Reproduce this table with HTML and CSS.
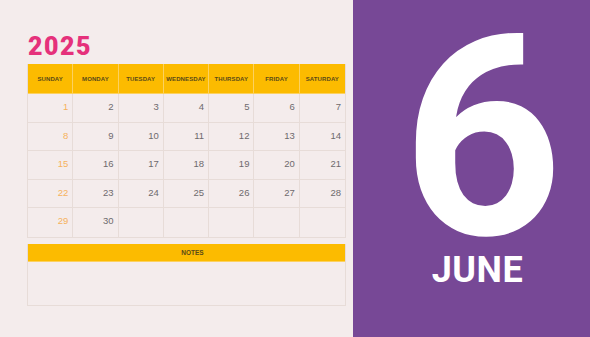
FILE: index.html
```html
<!DOCTYPE html>
<html>
<head>
<meta charset="utf-8">
<link rel="stylesheet" href="styles.css">
</head>
<body>
<div class="page">
  <section class="left">
    <h1 class="year">2025</h1>
    <div class="cal">
      <div class="hd">SUNDAY</div><div class="hd">MONDAY</div><div class="hd">TUESDAY</div><div class="hd">WEDNESDAY</div><div class="hd">THURSDAY</div><div class="hd">FRIDAY</div><div class="hd">SATURDAY</div>
      <div class="d sun">1</div><div class="d">2</div><div class="d">3</div><div class="d">4</div><div class="d">5</div><div class="d">6</div><div class="d">7</div>
      <div class="d sun">8</div><div class="d">9</div><div class="d">10</div><div class="d">11</div><div class="d">12</div><div class="d">13</div><div class="d">14</div>
      <div class="d sun">15</div><div class="d">16</div><div class="d">17</div><div class="d">18</div><div class="d">19</div><div class="d">20</div><div class="d">21</div>
      <div class="d sun">22</div><div class="d">23</div><div class="d">24</div><div class="d">25</div><div class="d">26</div><div class="d">27</div><div class="d">28</div>
      <div class="d sun">29</div><div class="d">30</div><div class="d"></div><div class="d"></div><div class="d"></div><div class="d"></div><div class="d"></div>
    </div>
    <div class="notes">
      <div class="notes-hd">NOTES</div>
      <div class="notes-body"></div>
    </div>
  </section>
  <section class="right">
    <div class="num">6</div>
    <div class="month">JUNE</div>
  </section>
</div>
</body>
</html>
```
FILE: styles.css
```css
html, body {
  margin: 0;
  padding: 0;
}
body {
  background: #f4ecec;
  width: 590px;
  height: 337px;
  overflow: hidden;
  font-family: "Liberation Sans", Arial, sans-serif;
}
.page {
  display: flex;
  height: 337px;
}
.left {
  width: 353px;
  padding: 34px 0 0 27px;
  box-sizing: border-box;
}
.year {
  margin: 0 0 5px 1px;
  font-family: Roboto, sans-serif;
  font-weight: 900;
  font-size: 25px;
  line-height: 25px;
  letter-spacing: 1.5px;
  color: #e5317b;
}
.cal {
  width: 319px;
  display: grid;
  grid-template-columns: repeat(7, 1fr);
  grid-template-rows: 30px repeat(5, 28.6px);
  border: 1px solid #e7dcd8;
  border-top: none;
  box-sizing: border-box;
}
.hd {
  background: #fcbb00;
  border-right: 1px solid #fcd160;
  border-bottom: 1px solid #fcd160;
  font-size: 6px;
  font-weight: bold;
  color: #5a4a18;
  display: flex;
  align-items: center;
  justify-content: center;
  letter-spacing: 0.1px;
}
.hd:nth-child(7) {
  border-right: none;
}
.d {
  border-right: 1px solid #e7dcd8;
  border-bottom: 1px solid #e7dcd8;
  font-size: 9.5px;
  color: #6e6a6c;
  text-align: right;
  padding: 7px 4px 0 0;
  box-sizing: border-box;
}
.d:nth-child(7n) {
  border-right: none;
}
.cal .d:nth-last-child(-n+7) {
  border-bottom: none;
}
.d.sun {
  color: #f6b25c;
}
.notes {
  margin-top: 6px;
  width: 319px;
  border: 1px solid #e7dcd8;
  border-top: none;
  box-sizing: border-box;
}
.notes-hd {
  height: 18px;
  background: #fcbb00;
  border-bottom: 1px solid #fcd160;
  box-sizing: border-box;
  font-size: 6.5px;
  font-weight: bold;
  color: #5a4a18;
  display: flex;
  align-items: center;
  justify-content: center;
  padding-left: 12px;
}
.notes-body {
  height: 43px;
}
.right {
  flex: 1;
  background: #774896;
  display: flex;
  flex-direction: column;
  align-items: center;
  padding: 38px 0 0 12px;
  color: #ffffff;
  font-family: Roboto, sans-serif;
  font-weight: 700;
}
.num {
  font-size: 280px;
  line-height: 200px;
  margin-left: 10px;
}
.month {
  margin-top: 14px;
  font-size: 36px;
  line-height: 36px;
  letter-spacing: 0.5px;
}
```
